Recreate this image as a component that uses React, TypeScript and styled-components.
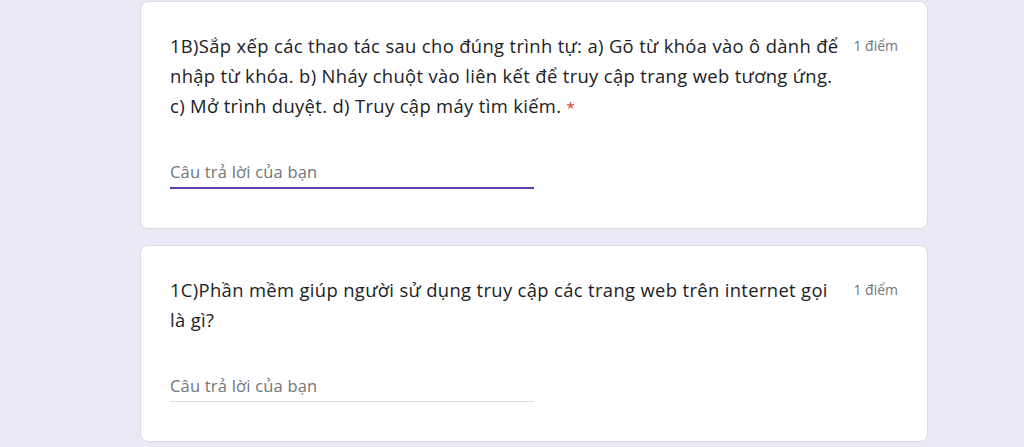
import React from "react";
import styled, { createGlobalStyle } from "styled-components";

const Global = createGlobalStyle`
  html, body { margin: 0; padding: 0; background: #ebe9f6; }
  body { font-family: "Open Sans", Roboto, sans-serif; }
`;

const Page = styled.div`
  display: flex;
  flex-direction: column;
  gap: 16px;
  padding: 1px 96px 0 140px;
  min-height: 447px;
  box-sizing: border-box;
`;

const Card = styled.div`
  background: #fff;
  border: 1px solid #dcdae6;
  border-radius: 8px;
  padding: 29px 29px 39px 29px;
`;

const Header = styled.div`
  display: flex;
  align-items: flex-start;
  justify-content: space-between;
  gap: 10px;
`;

const Question = styled.div`
  font-size: 18.4px;
  line-height: 30px;
  letter-spacing: 0.35px;
  color: #202124;
  white-space: nowrap;
`;

const Required = styled.span`
  color: #d93025;
  font-size: 15px;
  margin-left: 5px;
`;

const Points = styled.div`
  font-size: 14px;
  line-height: 30px;
  color: #70757a;
  white-space: nowrap;
`;

const Answer = styled.div<{ $focused?: boolean }>`
  margin-top: ${(p) => (p.$focused ? "38px" : "39px")};
  width: 364px;
  padding-bottom: 3px;
  border-bottom: ${(p) => (p.$focused ? "2px solid #673ab7" : "1px solid #dadce0")};
  font-size: 16.5px;
  letter-spacing: 0.2px;
  line-height: 24px;
  color: #70757a;
`;

export default function App() {
  return (
    <>
      <Global />
      <Page>
        <Card>
          <Header>
            <Question>
              1B)Sắp xếp các thao tác sau cho đúng trình tự: a) Gõ từ khóa vào ô dành để
              <br />
              nhập từ khóa. b) Nháy chuột vào liên kết để truy cập trang web tương ứng.
              <br />
              c) Mở trình duyệt. d) Truy cập máy tìm kiếm.
              <Required>*</Required>
            </Question>
            <Points>1 điểm</Points>
          </Header>
          <Answer $focused>Câu trả lời của bạn</Answer>
        </Card>
        <Card>
          <Header>
            <Question>
              1C)Phần mềm giúp người sử dụng truy cập các trang web trên internet gọi
              <br />
              là gì?
            </Question>
            <Points>1 điểm</Points>
          </Header>
          <Answer>Câu trả lời của bạn</Answer>
        </Card>
      </Page>
    </>
  );
}
